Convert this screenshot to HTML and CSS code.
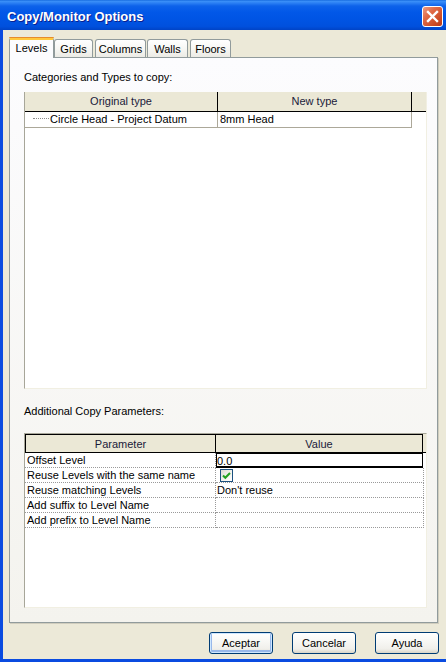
FILE: index.html
```html
<!DOCTYPE html>
<html>
<head>
<meta charset="utf-8">
<link rel="stylesheet" href="styles.css">
</head>
<body>
<div class="window">
  <div class="titlebar">
    <span class="title">Copy/Monitor Options</span>
    <div class="close">
      <svg width="19" height="19" viewBox="0 0 19 19"><path d="M5 5 L14 14 M14 5 L5 14" stroke="#fff" stroke-width="2.4" stroke-linecap="square"/></svg>
    </div>
  </div>
  <div class="client">
    <div class="tabs">
      <div class="tab sel t-levels">Levels</div>
      <div class="tab t-grids">Grids</div>
      <div class="tab t-columns">Columns</div>
      <div class="tab t-walls">Walls</div>
      <div class="tab t-floors">Floors</div>
    </div>
    <div class="panel">
      <div class="label l1">Categories and Types to copy:</div>
      <div class="grid g1">
        <div class="g1-head">
          <div class="hc c1">Original type</div>
          <div class="hc c2">New type</div>
        </div>
        <div class="g1-row">
          <div class="dc c1"><span class="tree"></span>Circle Head - Project Datum</div>
          <div class="dc c2">8mm Head</div>
        </div>
      </div>
      <div class="label l2">Additional Copy Parameters:</div>
      <div class="grid g2">
        <div class="g2-head">
          <div class="hc p1">Parameter</div>
          <div class="hc p2">Value</div>
        </div>
        <div class="g2-row">
          <div class="pc p1">Offset Level</div>
          <div class="pc p2 edit">0.0</div>
        </div>
        <div class="g2-row">
          <div class="pc p1">Reuse Levels with the same name</div>
          <div class="pc p2"><span class="check"><svg width="11" height="11" viewBox="0 0 11 11"><path d="M2 5.5 L4.3 7.8 L9 3" fill="none" stroke="#21a121" stroke-width="2"/></svg></span></div>
        </div>
        <div class="g2-row">
          <div class="pc p1">Reuse matching Levels</div>
          <div class="pc p2">Don't reuse</div>
        </div>
        <div class="g2-row">
          <div class="pc p1">Add suffix to Level Name</div>
          <div class="pc p2"></div>
        </div>
        <div class="g2-row">
          <div class="pc p1">Add prefix to Level Name</div>
          <div class="pc p2"></div>
        </div>
      </div>
    </div>
    <div class="buttons">
      <div class="btn def">Aceptar</div>
      <div class="btn">Cancelar</div>
      <div class="btn">Ayuda</div>
    </div>
  </div>
</div>
</body>
</html>
```

FILE: styles.css
```css
* { box-sizing: border-box; }
html, body { margin: 0; padding: 0; }
body {
  font-family: "Liberation Sans", Arial, sans-serif;
  font-size: 11px;
  color: #000;
  background: #ECE9D8;
}
.window {
  width: 446px;
  height: 662px;
  display: flex;
  flex-direction: column;
  overflow: hidden;
}
.titlebar {
  height: 30px;
  flex: none;
  display: flex;
  align-items: flex-start;
  justify-content: space-between;
  background: linear-gradient(to bottom, #0A5FD8 0, #3D92F8 1px, #2B80F4 3px, #0D62EA 6px, #0258E8 12px, #0055E5 60%, #0050DD 88%, #0043C6 100%);
}
.title {
  color: #fff;
  font-weight: bold;
  font-size: 13px;
  margin: 9px 0 0 7px;
  line-height: 16px;
  text-shadow: 1px 1px 0 #0A1F8F;
}
.close {
  width: 21px;
  height: 21px;
  margin: 6px 3px 0 0;
  border: 1px solid #fff;
  border-radius: 3px;
  background: linear-gradient(135deg, #EE9C82 0%, #E06A47 35%, #CC4B24 75%, #B8391A 100%);
  display: flex;
  align-items: center;
  justify-content: center;
}
.close svg { display: block; }
.client {
  flex: 1;
  border-left: 3px solid #0A4BE0;
  border-bottom: 3px solid #0A4BE0;
  padding-left: 6px;
  display: flex;
  flex-direction: column;
}
.tabs {
  height: 20px;
  margin-top: 7px;
  display: flex;
  align-items: flex-end;
}
.tab {
  height: 18px;
  border: 1px solid #919B9C;
  border-bottom: none;
  border-radius: 3px 3px 0 0;
  background: linear-gradient(to bottom, #FFFFFF 0%, #F7F7F4 50%, #ECEBE5 100%);
  text-align: center;
  line-height: 18px;
  margin-left: 1px;
}
.tab.sel {
  height: 21px;
  margin-bottom: -1px;
  margin-left: 0;
  position: relative;
  z-index: 2;
  background: #FCFCFE;
  border-top: 3px solid #FFC83C;
  box-shadow: inset 0 0 0 0 transparent;
  line-height: 16px;
}
.tab.sel::before {
  content: "";
  position: absolute;
  left: -1px;
  right: -1px;
  top: -3px;
  height: 1px;
  background: #E68B2C;
  border-radius: 3px 3px 0 0;
}
.t-levels { width: 45px; }
.t-grids { width: 39px; margin-left: 0; }
.t-columns { width: 51px; margin-left: 2px; }
.t-walls { width: 41px; }
.t-floors { width: 41px; margin-left: 2px; }
.panel {
  width: 429px;
  height: 566px;
  flex: none;
  border: 1px solid #919B9C;
  box-shadow: 1px 1px 0 #D0CDBE;
  background: linear-gradient(to bottom, #FCFCFE 0%, #F4F3EE 100%);
  padding: 12px 10px 0 14px;
}
.label {
  height: 14px;
  line-height: 14px;
}
.l1 { margin-bottom: 8px; }
.l2 { margin-top: 15px; margin-bottom: 15px; }
.grid {
  width: 403px;
  background: #fff;
  border-left: 1px solid #A7A699;
  border-top: 1px solid #A7A699;
  border-right: 1px solid #F1EFE2;
  border-bottom: 1px solid #F1EFE2;
}
.g1 { height: 297px; border-top: none; }
.g2 { height: 175px; }
.g1-head {
  height: 20px;
  background: #EBE8D6;
  border-bottom: 1px solid #000;
  display: flex;
}
.hc {
  text-align: center;
  line-height: 19px;
  color: #1A1A3A;
}
.g1-head .c1 { width: 193px; border-right: 1px solid #000; }
.g1-head .c2 { width: 194px; border-right: 1px solid #000; }
.g1-row { display: flex; height: 16px; }
.dc {
  height: 16px;
  line-height: 15px;
  border-bottom: 1px solid #ACA899;
  border-right: 1px solid #ACA899;
  white-space: nowrap;
  overflow: hidden;
}
.g1-row .c1 { width: 193px; }
.g1-row .c2 { width: 194px; padding-left: 2px; }
.tree {
  display: inline-block;
  width: 16px;
  margin-left: 8px;
  margin-right: 1px;
  height: 1px;
  border-top: 1px dotted #8A8A8A;
  vertical-align: 4px;
}
.g2-head {
  height: 19px;
  background: #EBE8D6;
  display: flex;
  border-bottom: 1px solid #000;
}
.g2-head .hc { line-height: 18px; border-top: 1px solid #000; }
.g2-head .p1 { width: 191px; border-left: 1px solid #000; border-right: 1px solid #000; }
.g2-head .p2 { width: 207px; border-right: 1px solid #000; }
.g2-row { display: flex; height: 15px; }
.pc {
  height: 15px;
  line-height: 14px;
  border-bottom: 1px dotted #9A9A9A;
  border-right: 1px dotted #9A9A9A;
  white-space: nowrap;
  overflow: hidden;
}
.g2-row .p1 { width: 191px; padding-left: 2px; }
.g2-row .p2 { width: 208px; padding-left: 1px; }
.g2-row .edit { border: 1px solid #000; border-bottom-width: 2px; width: 207px; padding-left: 0; }
.check {
  display: inline-flex;
  align-items: center;
  justify-content: center;
  width: 13px;
  height: 13px;
  margin: 1px 0 0 3px;
  border: 1px solid #1C5180;
  background: linear-gradient(135deg, #DCDBD5 0%, #F4F4F0 60%, #FFFFFF 100%);
  vertical-align: top;
}
.check svg { display: block; }
.buttons {
  display: flex;
  justify-content: flex-end;
  gap: 19px;
  margin-top: 9px;
  padding-right: 7px;
}
.btn {
  width: 64px;
  height: 22px;
  border: 1px solid #003C74;
  border-radius: 3px;
  background: linear-gradient(to bottom, #FFFFFF 0%, #F8F8F5 40%, #F0EFEA 80%, #D8D4C8 100%);
  text-align: center;
  line-height: 20px;
}
.btn.def {
  box-shadow: inset 0 0 0 1px #CEE7FF, inset 0 -1px 0 2px #98B8EA;
}
```
